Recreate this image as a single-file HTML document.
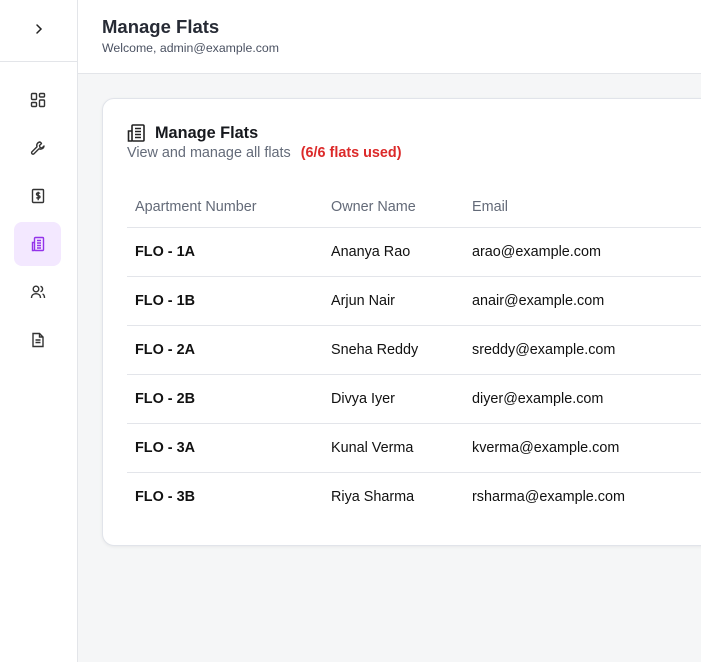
<!DOCTYPE html>
<html><head><style>
*{box-sizing:border-box;margin:0;padding:0}
body{width:701px;height:662px;overflow:hidden;background:#f5f6f7;font-family:"Liberation Sans",sans-serif;position:relative}
.side{position:absolute;left:0;top:0;width:78px;height:662px;background:#fff;border-right:1px solid #e3e5e9}
.side .top{height:62px;border-bottom:1px solid #e3e5e9;display:flex;align-items:center;justify-content:center;padding-bottom:4px}
.ic{position:absolute;left:14px;width:47px;height:44px;border-radius:8px;display:flex;align-items:center;justify-content:center}
.hdr{position:absolute;left:78px;top:0;right:0;height:74px;background:#fff;border-bottom:1px solid #e3e5e9}
.hdr h1{position:absolute;left:24px;top:16px;font-size:18.5px;font-weight:bold;color:#272b35}
.hdr p{position:absolute;left:24px;top:41px;font-size:12.3px;color:#4b5262}
.card{position:absolute;left:102px;top:98px;width:640px;height:448px;background:#fff;border:1px solid #e1e4ea;border-radius:12px;box-shadow:0 1px 3px rgba(0,0,0,.06)}
.title{position:absolute;top:124px;font-size:16.3px;font-weight:bold;color:#16181d}
.sub{position:absolute;left:127px;top:145px;font-size:14.4px;color:#646b79}
.sub b{color:#dc2a2a;margin-left:6px}
.th{position:absolute;top:199px;font-size:14.4px;color:#636a78}
.line{position:absolute;left:127px;right:0;height:1px;background:#e3e5ea}
.cell{position:absolute;font-size:14.4px;color:#111}
</style></head><body>
<div class="side">
<div class="top"><svg width="12" height="12" viewBox="0 0 12 12"><path d="M4 2l4 4-4 4" fill="none" stroke="#222" stroke-width="1.5" stroke-linecap="round"/></svg></div>
<div class="ic" style="top:78px"><svg width="16" height="16" viewBox="0 0 16 16" fill="none" stroke="#333" stroke-width="1.4"><rect x="1.5" y="1.5" width="5" height="6" rx="1"/><rect x="9.5" y="1.5" width="5" height="3.5" rx="1"/><rect x="1.5" y="10.5" width="5" height="4" rx="1"/><rect x="9.5" y="8" width="5" height="6.5" rx="1"/></svg></div>
<div class="ic" style="top:126px"><svg width="16" height="16" viewBox="0 0 16 16" fill="none" stroke="#333" stroke-width="1.4" stroke-linejoin="round"><path d="M10 2a3.5 3.5 0 0 0-3 4.8L2 11.8a1.4 1.4 0 0 0 2 2l5-5A3.5 3.5 0 0 0 14 6l-2 2-2-.5L9.5 5.5l2-2A3.5 3.5 0 0 0 10 2z"/></svg></div>
<div class="ic" style="top:174px"><svg width="16" height="16" viewBox="0 0 16 16" fill="none" stroke="#333" stroke-width="1.4"><rect x="2.5" y="1.5" width="11" height="13" rx="1"/><path d="M10 5.5c-.5-.7-3.5-1-3.5.7 0 1.8 3.5.9 3.5 2.7 0 1.6-3 1.3-3.6.6M8.2 3.8v8.4"/></svg></div>
<div class="ic" style="top:222px;background:#f3e8ff"><svg width="16" height="16" viewBox="0 0 16 16" fill="none" stroke="#9333ea" stroke-width="1.4"><rect x="4.5" y="1.5" width="9" height="13" rx="1"/><path d="M4.5 6.5h-2v8h2M7 4.5h4M7 7h4M7 9.5h4M7 12h4"/></svg></div>
<div class="ic" style="top:270px"><svg width="16" height="16" viewBox="0 0 16 16" fill="none" stroke="#333" stroke-width="1.4"><circle cx="6" cy="5" r="2.8"/><path d="M1.5 14c0-2.8 2-4.3 4.5-4.3s4.5 1.5 4.5 4.3M10.5 2.3a2.8 2.8 0 0 1 0 5.4M12.5 10c1.3.5 2 1.8 2 4"/></svg></div>
<div class="ic" style="top:318px"><svg width="16" height="16" viewBox="0 0 16 16" fill="none" stroke="#333" stroke-width="1.4"><path d="M3 1.5h6.5l3.5 3.5v9.5H3z M9.5 1.5V5H13M5.5 8h5M5.5 10.5h5"/></svg></div>
</div>
<div class="hdr"><h1>Manage Flats</h1><p>Welcome, admin@example.com</p></div>
<div class="card"></div>
<svg style="position:absolute;left:127px;top:124px" width="20" height="18" viewBox="0 0 20 18" fill="none" stroke="#222" stroke-width="1.6"><rect x="5" y="1" width="12" height="16" rx="1"/><path d="M5 7H1.5v10H5M8 4.5h6M8 7.5h6M8 10.5h6M8 13.5h6"/></svg>
<div class="title" style="left:155px">Manage Flats</div>
<div class="sub">View and manage all flats <b>(6/6 flats used)</b></div>
<div class="th" style="left:135px">Apartment Number</div>
<div class="th" style="left:331px">Owner Name</div>
<div class="th" style="left:472px">Email</div>
<div class="line" style="top:227px"></div>
<div class="cell" style="left:135px;top:244px;font-weight:bold">FLO - 1A</div><div class="cell" style="left:331px;top:244px">Ananya Rao</div><div class="cell" style="left:472px;top:244px">arao@example.com</div>
<div class="line" style="top:276px"></div>
<div class="cell" style="left:135px;top:293px;font-weight:bold">FLO - 1B</div><div class="cell" style="left:331px;top:293px">Arjun Nair</div><div class="cell" style="left:472px;top:293px">anair@example.com</div>
<div class="line" style="top:325px"></div>
<div class="cell" style="left:135px;top:342px;font-weight:bold">FLO - 2A</div><div class="cell" style="left:331px;top:342px">Sneha Reddy</div><div class="cell" style="left:472px;top:342px">sreddy@example.com</div>
<div class="line" style="top:374px"></div>
<div class="cell" style="left:135px;top:391px;font-weight:bold">FLO - 2B</div><div class="cell" style="left:331px;top:391px">Divya Iyer</div><div class="cell" style="left:472px;top:391px">diyer@example.com</div>
<div class="line" style="top:423px"></div>
<div class="cell" style="left:135px;top:440px;font-weight:bold">FLO - 3A</div><div class="cell" style="left:331px;top:440px">Kunal Verma</div><div class="cell" style="left:472px;top:440px">kverma@example.com</div>
<div class="line" style="top:472px"></div>
<div class="cell" style="left:135px;top:489px;font-weight:bold">FLO - 3B</div><div class="cell" style="left:331px;top:489px">Riya Sharma</div><div class="cell" style="left:472px;top:489px">rsharma@example.com</div>
</body></html>
